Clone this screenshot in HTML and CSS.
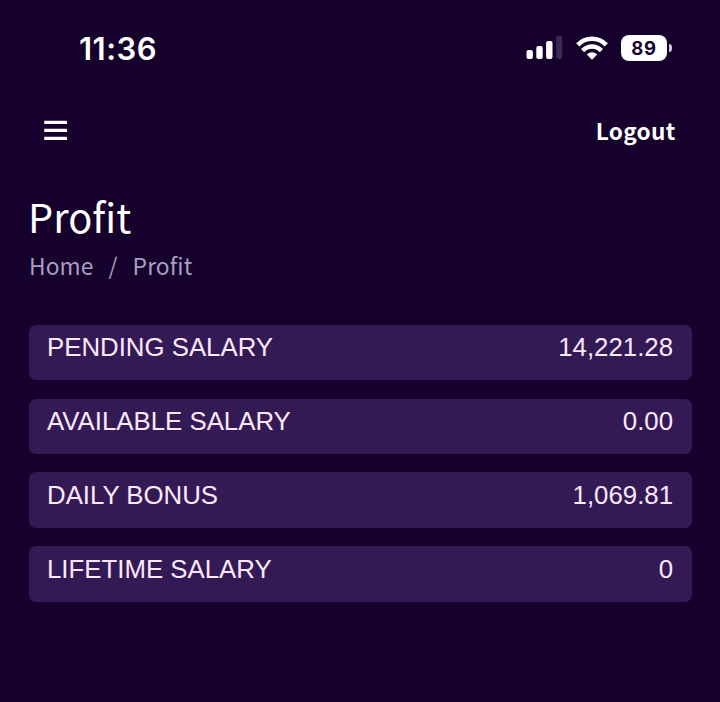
FILE: index.html
```html
<!DOCTYPE html>
<html lang="en">
<head>
<meta charset="utf-8">
<title>Profit</title>
<link rel="stylesheet" href="styles.css">
</head>
<body>
<div class="status">
  <span class="time">11:36</span>
  <div class="indicators">
    <svg class="signal" width="37" height="24" viewBox="0 0 37 24" fill="#fff">
      <rect x="0.5" y="14" width="6.4" height="9" rx="2"/>
      <rect x="10.3" y="10" width="6.4" height="13" rx="2"/>
      <rect x="20.1" y="5" width="6.4" height="18" rx="2"/>
      <rect x="30.2" y="0" width="6" height="23" rx="2" fill="#3a2956"/>
    </svg>
    <svg class="wifi" width="32" height="24" viewBox="0 0 32 24" fill="none" stroke="#fff">
      <path d="M1.8 8.9C9.5 0.7 22.5 0.7 30.2 8.9" stroke-width="4.6"/>
      <path d="M6.6 14.6C12 9.1 20 9.1 25.4 14.6" stroke-width="4.4"/>
      <path d="M10.8 18.6C14 15.6 18 15.6 21.2 18.6L16 23.7Z" fill="#fff" stroke="none"/>
    </svg>
    <div class="battery"><span class="level">89</span><i class="cap"></i></div>
  </div>
</div>
<header class="topbar">
  <svg class="menu" width="24" height="22" viewBox="0 0 24 22" fill="#fff">
    <rect x="0.2" y="0.7" width="22.8" height="3.3" rx="0.6"/>
    <rect x="0.2" y="8.7" width="22.8" height="3.3" rx="0.6"/>
    <rect x="0.2" y="16.7" width="22.8" height="3.3" rx="0.6"/>
  </svg>
  <span class="logout">Logout</span>
</header>
<main>
  <h1>Profit</h1>
  <nav class="crumbs"><span>Home</span><span class="slash">/</span><span>Profit</span></nav>
  <section class="cards">
    <div class="card"><span>PENDING SALARY</span><span>14,221.28</span></div>
    <div class="card"><span>AVAILABLE SALARY</span><span>0.00</span></div>
    <div class="card"><span>DAILY BONUS</span><span>1,069.81</span></div>
    <div class="card"><span>LIFETIME SALARY</span><span>0</span></div>
  </section>
</main>
</body>
</html>
```
FILE: styles.css
```css
* { box-sizing: border-box; }
body {
  margin: 0;
  height: 702px;
  overflow: hidden;
  background: #15012c;
  color: #fff;
  font-family: "Noto Sans CJK JP", "Noto Sans", sans-serif;
}
svg { display: block; }
.status {
  display: flex;
  justify-content: space-between;
  align-items: center;
  height: 96px;
  padding: 0 53px 0 79px;
}
.time {
  padding-top: 2px;
  font: 600 31px/36px Inter, sans-serif;
  letter-spacing: 0.5px;
}
.indicators { display: flex; align-items: center; }
.signal { margin-right: 13px; }
.wifi { margin-right: 13px; }
.battery {
  position: relative;
  width: 46px;
  height: 26px;
  border-radius: 8px;
  background: #fff;
  color: #15012c;
  font: 700 18.5px/27px Inter, sans-serif;
  letter-spacing: 0.8px;
  text-align: center;
}
.cap {
  position: absolute;
  left: 48px;
  top: 9px;
  width: 3px;
  height: 8px;
  border-radius: 0 3px 3px 0;
  background: #cfc8d8;
}
.topbar {
  display: flex;
  justify-content: space-between;
  align-items: center;
  height: 68px;
  padding: 0 44.5px 0 44px;
}
.menu { margin-top: 1px; }
.logout { padding-top: 2px; font-size: 22.6px; font-weight: 700; line-height: 32px; letter-spacing: 0.3px; }
main { padding: 27.5px 28px 0 29px; }
h1 {
  margin: 0 0 0 -1px;
  font-size: 39.8px;
  font-weight: 400;
  line-height: 48px;
}
.crumbs {
  display: flex;
  height: 32px;
  margin-top: 10.5px;
  font-size: 22.8px;
  line-height: 32px;
  letter-spacing: 0.1px;
  color: #a99fc0;
}
.slash { margin: 0 15px; }
.cards {
  display: grid;
  gap: 18.4px;
  margin-top: 42.7px;
}
.card {
  display: flex;
  justify-content: space-between;
  height: 55.5px;
  padding: 7.5px 19px 0 18px;
  border-radius: 7px;
  background: #341a54;
  color: #fce9ff;
  font: 25.8px/31px "Liberation Sans", sans-serif;
}
```
